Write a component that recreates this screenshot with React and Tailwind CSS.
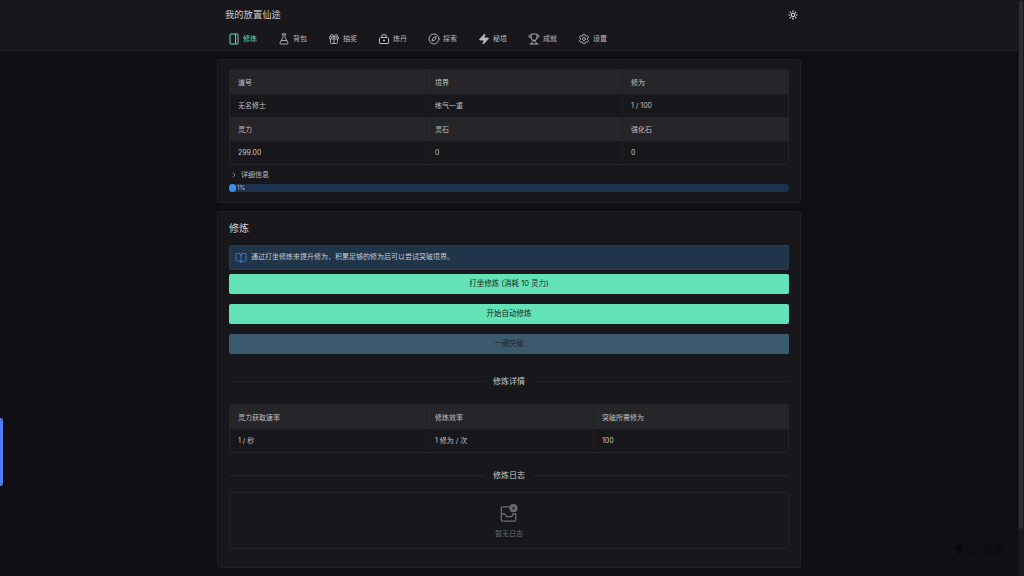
import React from 'react'
import { FlaskConical, Gift, Compass, Zap, Trophy, Settings, Sun, BookOpen, ChevronRight } from 'lucide-react'

const FONT = "font-['Inter','Noto_Sans_CJK_SC',sans-serif]"

function NoteIcon({ className }) {
  return (
    <svg className={className} viewBox="0 0 24 24" fill="none" stroke="currentColor" strokeWidth="2">
      <rect x="4" y="2" width="16" height="20" rx="1.5" />
      <path d="M15 2v20" />
    </svg>
  )
}

function BagIcon({ className }) {
  return (
    <svg className={className} viewBox="0 0 24 24" fill="none" stroke="currentColor" strokeWidth="2">
      <path d="M5 9h14a2 2 0 0 1 2 2v9a1 1 0 0 1-1 1H4a1 1 0 0 1-1-1v-9a2 2 0 0 1 2-2z" />
      <path d="M7 9l1.5-5.5h7L17 9" />
      <path d="M12 13v4M10 15h4" />
    </svg>
  )
}

function EmptyIcon() {
  return (
    <svg className="h-[18px] w-[18px] overflow-visible" viewBox="0 0 20 20" fill="none" stroke="#6b6b70" strokeWidth="1.4">
      <path d="M11 2H3a1.5 1.5 0 0 0-1.5 1.5v13A1.5 1.5 0 0 0 3 18h13a1.5 1.5 0 0 0 1.5-1.5V9" />
      <path d="M1.500 10h4l1.500 3h6l1.500-3h2.500" />
      <circle cx="15" cy="3.500" r="4.500" fill="#6b6b70" stroke="none" />
      <path d="M13.300 1.800l3.400 3.400M16.700 1.800l-3.400 3.400" stroke="#18181c" strokeWidth="1" />
    </svg>
  )
}

const navItems = [
  { label: '修炼', icon: NoteIcon, active: true },
  { label: '背包', icon: FlaskConical },
  { label: '抽奖', icon: Gift },
  { label: '炼丹', icon: BagIcon },
  { label: '探索', icon: Compass },
  { label: '秘境', icon: Zap, filled: true },
  { label: '成就', icon: Trophy },
  { label: '设置', icon: Settings },
]

function InfoTable({ columns, rows }) {
  return (
    <div className="rounded-[2px] border border-[#242428] text-[7px] text-[#c0c0c2]">
      {rows.map((row, i) => (
        <div
          key={i}
          className={`grid ${columns} ${row.head ? 'h-[24px] bg-[#26262a]' : 'h-[23px] bg-[#18181c]'}`}
        >
          {row.cells.map((cell, j) => (
            <div key={j} className={`flex items-center pl-[8px] pt-[2px] ${j < row.cells.length - 1 ? 'border-r border-[#1f1f23]' : ''}`}>
              {cell}
            </div>
          ))}
        </div>
      ))}
    </div>
  )
}

function Divider({ title, className }) {
  return (
    <div className={`flex items-center gap-[8px] ${className}`}>
      <div className="h-px flex-1 bg-[#232327]" />
      <span className="text-[8px] text-[#c8c8ca]">{title}</span>
      <div className="h-px flex-1 bg-[#232327]" />
    </div>
  )
}

export default function App() {
  return (
    <div className={`relative flex h-[576px] w-[1024px] overflow-hidden bg-[#101014] ${FONT}`}>
      <div className="min-w-0 flex-1">
        <header className="h-[51px] border-b border-[#202024] bg-[#18181c]">
          <div className="ml-[225px] flex w-[576px] items-center justify-between pt-[8px]">
            <h1 className="text-[9.300px] leading-[14px] font-normal text-[#c8c8ca]">我的放置仙途</h1>
            <Sun className="mr-[3px] h-[10px] w-[10px] text-[#e8e8ea]" strokeWidth={2.5} />
          </div>
          <nav className="ml-[228px] mt-[11px] flex gap-[21px]">
            {navItems.map((item) => {
              const Icon = item.icon
              return (
                <div key={item.label} className={`flex items-center gap-[3px] text-[7px] leading-[12px] ${item.active ? 'text-[#5fdcaa]' : 'text-[#b8b8ba]'}`}>
                  <Icon className="h-[12px] w-[12px]" fill={item.filled ? 'currentColor' : 'none'} strokeWidth={1.8} />
                  <span>{item.label}</span>
                </div>
              )
            })}
          </nav>
        </header>

        <main className="ml-[217px] w-[584px]">
          <section className="mt-[8px] h-[144px] rounded-[2px] border border-[#202024] bg-[#18181c] px-[11px] pt-[9px]">
            <InfoTable
              columns="grid-cols-[197px_196px_1fr]"
              rows={[
                { head: true, cells: ['道号', '境界', '修为'] },
                { cells: ['无名修士', '练气一重', '1 / 100'] },
                { head: true, cells: ['灵力', '灵石', '强化石'] },
                { cells: ['299.00', '0', '0'] },
              ]}
            />
            <div className="mt-[3px] flex h-[13px] items-center gap-[3px] pl-[1px] text-[7px] text-[#b8b8ba]">
              <ChevronRight className="h-[8px] w-[8px]" />
              <span className="leading-[8px]">详细信息</span>
            </div>
            <div className="mt-[3px] flex h-[8px] items-center rounded-full bg-[#1c324f]">
              <div className="h-[8px] w-[7px] rounded-full bg-[#3f8ff0]" />
              <span className="ml-[1px] text-[6px] leading-none text-[#b8b8ba]">1%</span>
            </div>
          </section>

          <section className="mt-[8px] h-[357px] rounded-[2px] border border-[#202024] bg-[#18181c] px-[11px] pt-[9px]">
            <h2 className="text-[10px] leading-[14px] font-normal text-[#d0d0d2]">修炼</h2>

            <div className="mt-[10px] flex h-[25px] items-center gap-[4px] rounded-[2px] border border-[#2a3e52] bg-[#20344a] pl-[5px] text-[7px] text-[#c8c8ca]">
              <BookOpen className="h-[12px] w-[12px] text-[#3f8ff0]" strokeWidth={1.5} />
              <span>通过打坐修炼来提升修为，积累足够的修为后可以尝试突破境界。</span>
            </div>

            <button className="mt-[4px] block h-[20px] w-full rounded-[2px] bg-[#63e2b7] text-[7.500px] text-[#1a2a24]">打坐修炼 (消耗 10 灵力)</button>
            <button className="mt-[10px] block h-[20px] w-full rounded-[2px] bg-[#63e2b7] text-[7.500px] text-[#1a2a24]">开始自动修炼</button>
            <button className="mt-[10px] block h-[20px] w-full rounded-[2px] bg-[#3b5a6e] text-[7.500px] text-[#1f2a32]">一键突破</button>

            <Divider title="修炼详情" className="mt-[21px]" />

            <div className="mt-[17px]">
              <InfoTable
                columns="grid-cols-[197px_167px_1fr]"
                rows={[
                  { head: true, cells: ['灵力获取速率', '修炼效率', '突破所需修为'] },
                  { cells: ['1 / 秒', '1 修为 / 次', '100'] },
                ]}
              />
            </div>

            <Divider title="修炼日志" className="mt-[16px]" />

            <div className="mt-[11px] flex h-[57px] flex-col items-center justify-center rounded-[2px] border border-[#232327] pt-[2px]">
              <EmptyIcon />
              <span className="mt-[6px] text-[7px] leading-[10px] text-[#6b6b70]">暂无日志</span>
            </div>
          </section>
        </main>
      </div>

      <div className="h-full w-[6px] bg-[#18181c] p-[1px]">
        <div className="h-[528px] w-full rounded-full bg-[#2e2e32]" />
      </div>

      {/* floating tab + watermark */}
      <div className="absolute left-0 top-[418px] h-[68px] w-[3px] rounded-r-[3px] bg-[#4f7ff0]" />
      <div className="absolute left-[954px] top-[545px] flex items-center gap-[3px] text-[9px] leading-[10px] text-[#08080a]">
        <svg className="h-[10px] w-[10px]" viewBox="0 0 10 10" fill="currentColor"><path d="M0 0h10L5 10z" /></svg>
        <span>七七资源</span>
      </div>
    </div>
  )
}
